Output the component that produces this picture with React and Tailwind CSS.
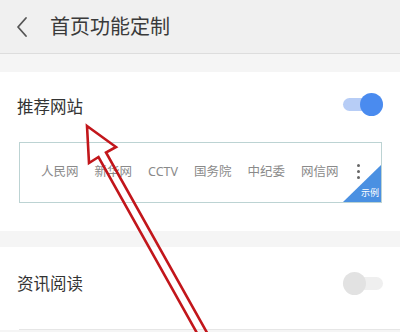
import React from "react";

const sites = ["人民网", "新华网", "CCTV", "国务院", "中纪委", "网信网"];

function Toggle({ on }) {
  return (
    <div className="relative w-[40px] h-[23px] flex items-center">
      <div
        className={
          on
            ? "w-full h-[13px] rounded-full bg-[#b7cdf6]"
            : "w-full h-[13px] rounded-full bg-[#efefef]"
        }
      ></div>
      <div
        className={
          on
            ? "absolute right-0 top-0 w-[23px] h-[23px] rounded-full bg-[#4a8bef]"
            : "absolute left-0 top-0 w-[23px] h-[23px] rounded-full bg-[#e2e2e2]"
        }
      ></div>
    </div>
  );
}

export default function App() {
  return (
    <div
      className="relative w-[400px] h-[332px] overflow-hidden bg-[#f5f5f5]"
      style={{ fontFamily: '"Noto Sans", "Noto Sans CJK SC", sans-serif' }}
    >
      <div className="h-[54px] bg-[#f0f0f0] border-b border-[#dddddd] flex items-center">
        <svg width="14" height="22" viewBox="0 0 14 22" className="ml-[15px]">
          <path d="M11 2 L3 11 L11 20" fill="none" stroke="#555" strokeWidth="1.8" strokeLinecap="round" strokeLinejoin="round" />
        </svg>
        <span className="ml-[21px] text-[20px] text-[#3a3a3a] leading-none">首页功能定制</span>
      </div>

      <div className="h-[18px]"></div>

      <div className="bg-white pb-[28px]">
        <div className="h-[70px] flex items-center justify-between pl-[17px] pr-[17px]">
          <span className="text-[16.5px] text-[#333]">推荐网站</span>
          <div className="-mt-[6px]">
            <Toggle on />
          </div>
        </div>
        <div className="relative mx-[19px] mr-[18px] h-[61px] border border-[#bcd3d3] flex items-center pl-[21px] gap-[16px] text-[12.5px] text-[#8a8a8a]">
          {sites.map((s) => (
            <span key={s}>{s}</span>
          ))}
          <div className="ml-[2px] -mt-[2px] flex flex-col gap-[3px]">
            <div className="w-[3px] h-[3px] rounded-full bg-[#666]"></div>
            <div className="w-[3px] h-[3px] rounded-full bg-[#666]"></div>
            <div className="w-[3px] h-[3px] rounded-full bg-[#666]"></div>
          </div>
          <div className="absolute right-0 bottom-0 w-[38px] h-[37px] bg-[#4a90e2] [clip-path:polygon(100%_0,100%_100%,0_100%)]"></div>
          <span className="absolute right-[2px] bottom-[5px] text-[9px] leading-none text-white">示例</span>
        </div>
      </div>

      <div className="h-[16px]"></div>

      <div className="bg-white">
        <div className="h-[82px] pb-[8px] flex items-center justify-between pl-[17px] pr-[17px]">
          <span className="text-[16.5px] text-[#333]">资讯阅读</span>
          <div className="-mt-[2px]">
            <Toggle on={false} />
          </div>
        </div>
        <div className="ml-[19px] border-t border-[#e6e6e6]"></div>
      </div>

      <svg
        className="absolute left-0 top-0 pointer-events-none"
        width="400"
        height="332"
        viewBox="0 0 400 332"
      >
        <polygon
          points="87,126 116,147 106,152.5 210,338 202,342 98.5,157 89,163"
          fill="none"
          stroke="#c2161b"
          strokeWidth="2.6"
          strokeLinejoin="miter"
        />
      </svg>
    </div>
  );
}
